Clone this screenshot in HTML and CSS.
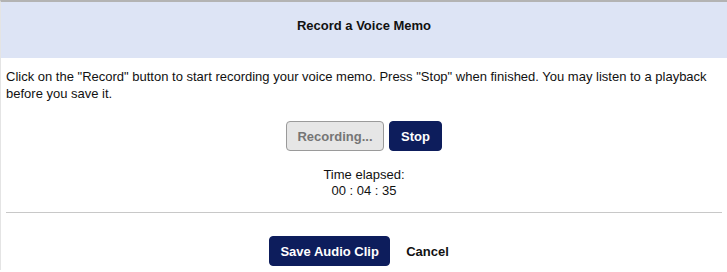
FILE: index.html
```html
<!DOCTYPE html>
<html>
<head>
<meta charset="utf-8">
<link rel="stylesheet" href="styles.css">
</head>
<body>
<div class="dialog">
  <div class="header"><h1 class="title">Record a Voice Memo</h1></div>
  <div class="body">
    <p class="intro">Click on the "Record" button to start recording your voice memo. Press "Stop" when finished. You may listen to a playback before you save it.</p>
    <div class="controls">
      <button class="btn btn-disabled" disabled>Recording...</button>
      <button class="btn btn-primary btn-stop">Stop</button>
    </div>
    <div class="timer">
      <div>Time elapsed:</div>
      <div>00 : 04 : 35</div>
    </div>
    <hr class="divider">
    <div class="actions">
      <button class="btn btn-primary btn-save">Save Audio Clip</button>
      <button class="btn btn-link">Cancel</button>
    </div>
  </div>
</div>
</body>
</html>
```
FILE: styles.css
```css
html, body {
  margin: 0;
  padding: 0;
  background: #fff;
}
body {
  font-family: "Liberation Sans", Arial, sans-serif;
  font-size: 13px;
  color: #111;
}
.dialog {
  border-top: 2px solid #b3b3b3;
  border-left: 1px solid #e4e4e4;
  height: 270px;
  box-sizing: border-box;
}
.header {
  background: #dde4f5;
  height: 56px;
  box-sizing: border-box;
  padding-top: 15px;
}
.title {
  margin: 0;
  text-align: center;
  font-size: 13px;
  line-height: 17px;
  font-weight: bold;
  color: #111;
}
.body {
  padding: 0 5px;
}
.intro {
  margin: 10px 0 0;
  line-height: 17px;
}
.controls {
  display: flex;
  justify-content: center;
  gap: 5px;
  margin-top: 19px;
}
.btn {
  font-family: "Liberation Sans", Arial, sans-serif;
  font-size: 13px;
  font-weight: bold;
  height: 30px;
  border-radius: 4px;
  padding: 0 10px;
  cursor: pointer;
}
.btn-disabled {
  width: 98px;
  background: #e6e6e6;
  border: 1px solid #9a9a9a;
  color: #757575;
}
.btn-primary {
  background: #0d1d5c;
  border: 1px solid #0d1d5c;
  color: #fff;
}
.btn-stop {
  width: 53px;
}
.timer {
  text-align: center;
  line-height: 16px;
  margin-top: 16px;
}
.divider {
  border: 0;
  border-top: 1px solid #c8c8c8;
  margin: 13px 0 0;
}
.actions {
  display: flex;
  justify-content: center;
  align-items: center;
  gap: 6px;
  margin-top: 23px;
}
.btn-save {
  width: 121px;
}
.btn-link {
  background: none;
  border: none;
  color: #111;
}
```
